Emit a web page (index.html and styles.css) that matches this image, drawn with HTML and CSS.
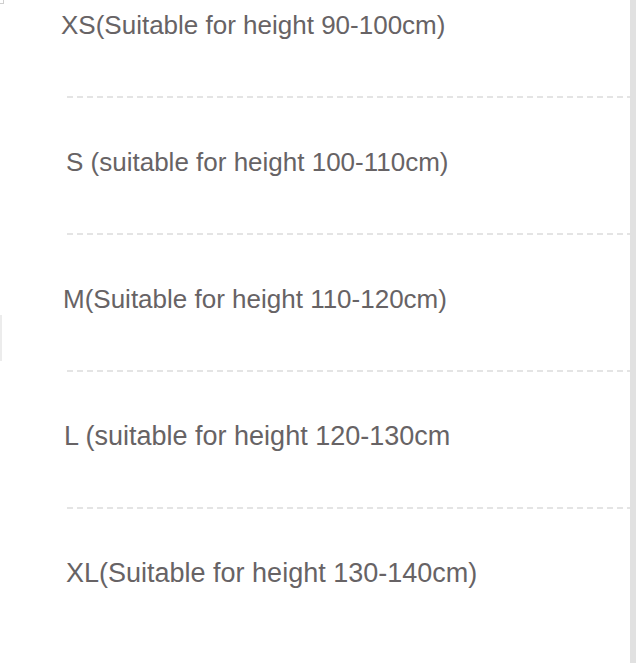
FILE: index.html
```html
<!DOCTYPE html>
<html>
<head>
<meta charset="utf-8">
<link rel="stylesheet" href="styles.css">
</head>
<body>
<div class="page">
  <div class="list">
    <div class="row r-xs"><span class="label">XS(Suitable for height 90-100cm)</span></div>
    <div class="sep"></div>
    <div class="row r-s"><span class="label">S (suitable for height 100-110cm)</span></div>
    <div class="sep"></div>
    <div class="row r-m"><span class="label">M(Suitable for height 110-120cm)</span></div>
    <div class="sep"></div>
    <div class="row r-l"><span class="label big">L (suitable for height 120-130cm</span></div>
    <div class="sep"></div>
    <div class="row r-xl"><span class="label big">XL(Suitable for height 130-140cm)</span></div>
  </div>
  <div class="edge"></div>
  <div class="tick-top"></div>
  <div class="tick-left"></div>
</div>
</body>
</html>
```

FILE: styles.css
```css
html, body {
  margin: 0;
  padding: 0;
  background: #ffffff;
}
.page {
  position: relative;
  width: 636px;
  height: 663px;
  display: flex;
  overflow: hidden;
}
.list {
  flex: 1;
  display: flex;
  flex-direction: column;
}
.row {
  height: 30px;
  display: flex;
  align-items: center;
  padding-left: 61px;
}
.label {
  font-family: "Liberation Sans", Arial, sans-serif;
  font-size: 26px;
  color: #676365;
  white-space: nowrap;
  line-height: 30px;
}
.label.big {
  font-size: 27px;
}
.r-xs { margin-top: 10px; }
.r-s { padding-left: 66px; margin-top: 49px; }
.r-m { padding-left: 63px; margin-top: 49px; }
.r-l { padding-left: 64px; margin-top: 49px; }
.r-xl { padding-left: 66px; margin-top: 49px; }
.sep {
  margin-top: 56px;
  margin-left: 67px;
  height: 2px;
  background: repeating-linear-gradient(to right, #e4e4e4 0 6px, transparent 6px 10px);
}
.edge {
  width: 6px;
  background: #e1e1e1;
}
.tick-top {
  position: absolute;
  left: 0;
  top: 0;
  width: 3px;
  height: 3px;
  border-right: 1px solid #cfcfcf;
  border-bottom: 1px solid #cfcfcf;
}
.tick-left {
  position: absolute;
  left: 0;
  top: 315px;
  width: 2px;
  height: 46px;
  background: #ececec;
}
```
